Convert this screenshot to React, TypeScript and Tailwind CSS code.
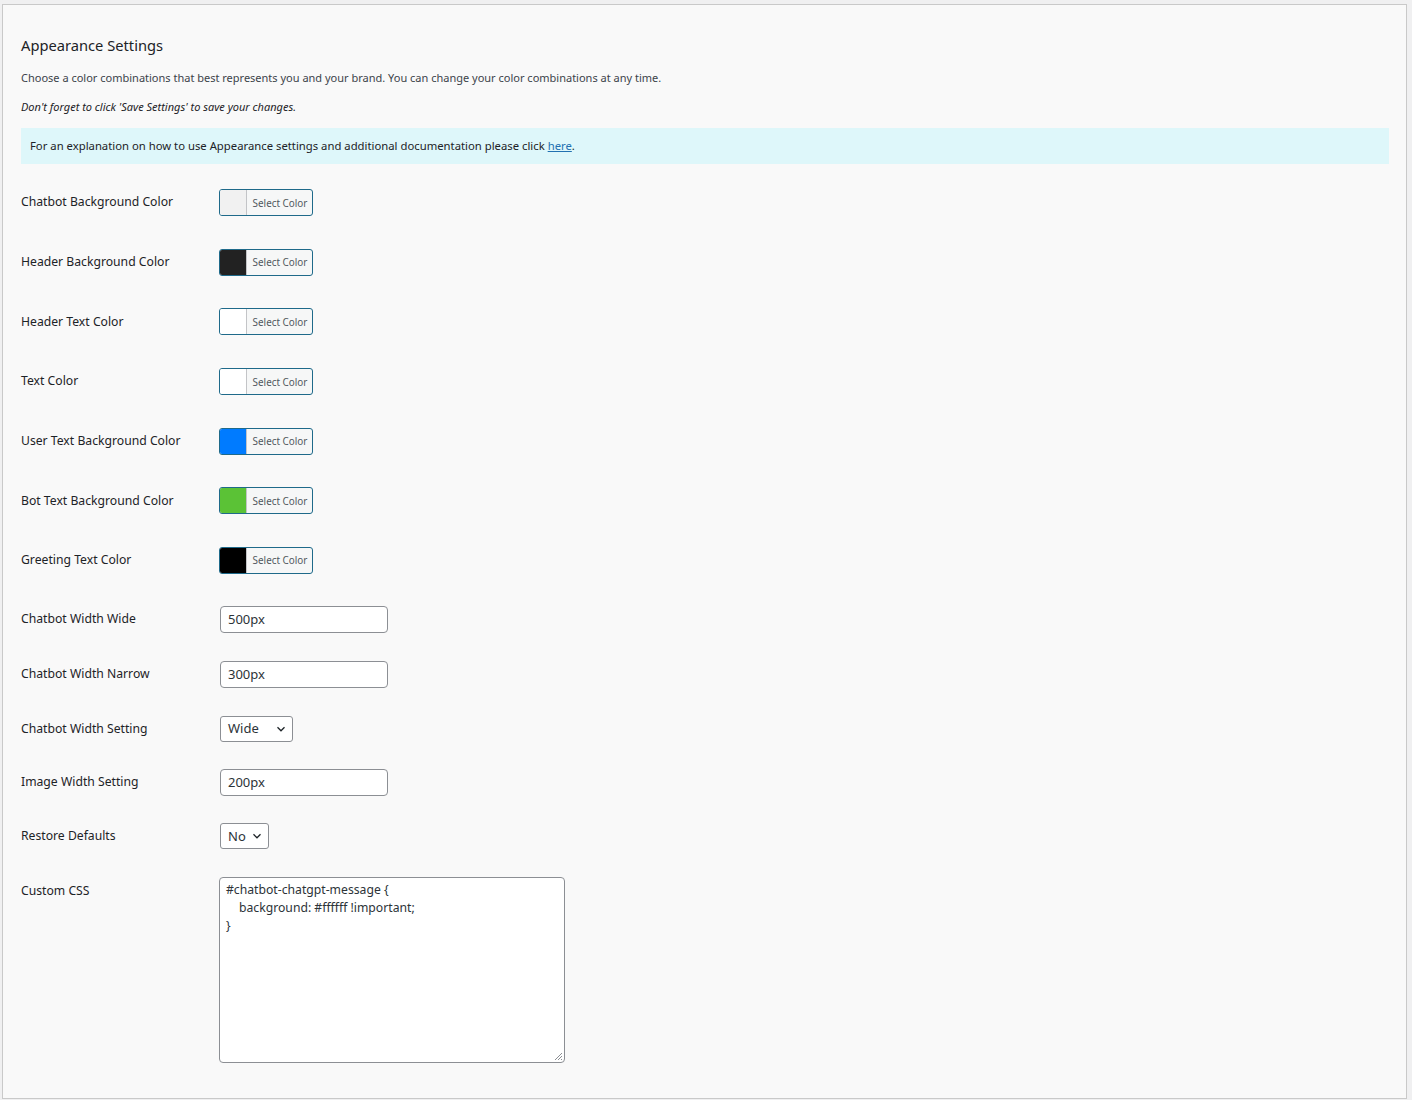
import React from "react";

const font = { fontFamily: '"Noto Sans", "Open Sans", sans-serif' };

const colorRows: { label: string; color: string }[] = [
  { label: "Chatbot Background Color", color: "#f1f1f1" },
  { label: "Header Background Color", color: "#222222" },
  { label: "Header Text Color", color: "#ffffff" },
  { label: "Text Color", color: "#ffffff" },
  { label: "User Text Background Color", color: "#007bff" },
  { label: "Bot Text Background Color", color: "#5bc236" },
  { label: "Greeting Text Color", color: "#000000" },
];

function Chevron() {
  return (
    <svg width="10" height="10" viewBox="0 0 10 10" className="shrink-0">
      <path d="M1.5 3.3 L5 6.8 L8.5 3.3" fill="none" stroke="#1d2327" strokeWidth="1.3" />
    </svg>
  );
}

function ColorButton({ color }: { color: string }) {
  return (
    <div className="flex h-[27px] w-[94px] overflow-hidden rounded-[3px] border border-[#1f6a8a] bg-[#f6f7f7]">
      <div className="h-full w-[27px] border-r border-[#c3c4c7]" style={{ backgroundColor: color }} />
      <div className="flex flex-1 items-center justify-center pl-[1px] pt-[1px] text-[9.9px] text-[#50575e]">Select Color</div>
    </div>
  );
}

function TextInput({ value }: { value: string }) {
  return (
    <div className="ml-[1px] flex h-[27px] w-[168px] items-center rounded-[4px] border border-[#8c8f94] bg-white px-[7px] text-[13px] text-[#2c3338]">
      {value}
    </div>
  );
}

function Select({ value, width }: { value: string; width: string }) {
  return (
    <div
      className={`ml-[1px] flex h-[26px] items-center justify-between rounded-[3px] border border-[#8c8f94] bg-white pl-[7px] pr-[6px] text-[13px] text-[#2c3338] ${width}`}
    >
      <span>{value}</span>
      <Chevron />
    </div>
  );
}

export default function App() {
  return (
    <div className="min-h-[1100px] bg-[#f0f0f1] pl-[2px] pr-[5px] pt-[4px] pb-[1px]" style={font}>
      <div className="h-[1095px] border border-[#c9c9c9] bg-[#f9f9f9] pl-[18px] pr-[17px] text-[#1d2327]">
        <h2 className="mt-[30px] text-[14.7px] leading-[20px] text-[#1d2327]">Appearance Settings</h2>
        <p className="mt-[15px] text-[11px] leading-[16px] text-[#3c434a]">
          Choose a color combinations that best represents you and your brand. You can change your color combinations at any time.
        </p>
        <p className="mt-[13px] text-[11px] italic leading-[16px] text-[#1d2327]">
          Don't forget to click 'Save Settings' to save your changes.
        </p>
        <div className="mt-[13px] flex h-[36px] items-center bg-[#def7fa] px-[9px] text-[11.3px] text-[#1d2327]">
          <span>
            For an explanation on how to use Appearance settings and additional documentation please click{" "}
            <a className="text-[#2271b1] underline">here</a>.
          </span>
        </div>

        <div className="mt-[8.67px] flex flex-col">
          {colorRows.map((r) => (
            <div key={r.label} className="flex h-[59.67px] items-center">
              <div className="w-[198px] text-[12.2px]">{r.label}</div>
              <ColorButton color={r.color} />
            </div>
          ))}
        </div>

        <div className="mt-[15.7px] flex flex-col">
          <div className="flex h-[27px] items-center">
            <div className="w-[198px] text-[12.2px]">Chatbot Width Wide</div>
            <TextInput value="500px" />
          </div>
          <div className="mt-[28px] flex h-[27px] items-center">
            <div className="w-[198px] text-[12.2px]">Chatbot Width Narrow</div>
            <TextInput value="300px" />
          </div>
          <div className="mt-[28px] flex h-[26px] items-center">
            <div className="w-[198px] text-[12.2px]">Chatbot Width Setting</div>
            <Select value="Wide" width="w-[73px]" />
          </div>
          <div className="mt-[27px] flex h-[27px] items-center">
            <div className="w-[198px] text-[12.2px]">Image Width Setting</div>
            <TextInput value="200px" />
          </div>
          <div className="mt-[27px] flex h-[27px] items-center">
            <div className="w-[198px] text-[12.2px]">Restore Defaults</div>
            <Select value="No" width="w-[49px]" />
          </div>
          <div className="mt-[27px] flex items-start">
            <div className="w-[198px] pt-[5px] text-[12.2px]">Custom CSS</div>
            <div className="relative h-[186px] w-[346px] rounded-[4px] border border-[#8c8f94] bg-white px-[6px] pt-[3px] text-[12.2px] leading-[18px] text-[#2c3338]">
              <div>#chatbot-chatgpt-message {"{"}</div>
              <div className="pl-[13px]">background: #ffffff !important;</div>
              <div>{"}"}</div>
              <svg width="9" height="9" viewBox="0 0 9 9" className="absolute bottom-[1px] right-[1px]">
                <path d="M8 1 L1 8 M8 4 L4 8 M8 7 L7 8" stroke="#8c8f94" strokeWidth="1" />
              </svg>
            </div>
          </div>
        </div>
      </div>
    </div>
  );
}
